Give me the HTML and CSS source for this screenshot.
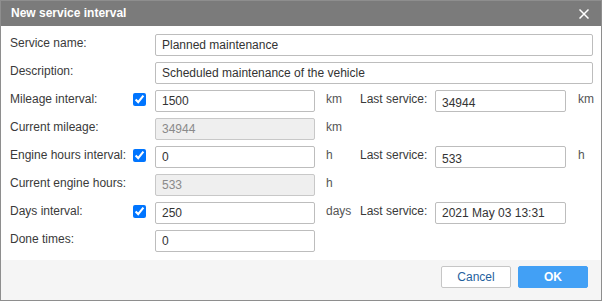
FILE: index.html
```html
<!DOCTYPE html>
<html>
<head>
  <title>New service interval</title>
  <link rel="stylesheet" href="styles.css">
</head>
<body>
  <div class="dialog">
    <div class="dialog-header">
      <span class="dialog-title">New service interval</span>
      <svg class="close-icon" width="10" height="10" viewBox="0 0 10 10">
        <path d="M0.5 0.5 L9.5 9.5 M9.5 0.5 L0.5 9.5" stroke="#ffffff" stroke-width="1.5" fill="none"/>
      </svg>
    </div>

    <div class="dialog-body">
      <label class="field-label">Service name:</label>
      <input class="field wide" type="text" value="Planned maintenance">

      <label class="field-label">Description:</label>
      <input class="field wide" type="text" value="Scheduled maintenance of the vehicle">

      <label class="field-label">Mileage interval:</label>
      <input class="check" type="checkbox" checked>
      <input class="field first-input" type="text" value="1500">
      <span class="unit">km</span>
      <span class="last-label">Last service:</span>
      <input class="field low" type="text" value="34944">
      <span class="unit unit-end">km</span>

      <label class="field-label">Current mileage:</label>
      <input class="field first-input" type="text" value="34944" disabled>
      <span class="unit">km</span>

      <label class="field-label">Engine hours interval:</label>
      <input class="check" type="checkbox" checked>
      <input class="field first-input" type="text" value="0">
      <span class="unit">h</span>
      <span class="last-label">Last service:</span>
      <input class="field low" type="text" value="533">
      <span class="unit unit-end">h</span>

      <label class="field-label">Current engine hours:</label>
      <input class="field first-input" type="text" value="533" disabled>
      <span class="unit">h</span>

      <label class="field-label">Days interval:</label>
      <input class="check" type="checkbox" checked>
      <input class="field first-input" type="text" value="250">
      <span class="unit">days</span>
      <span class="last-label">Last service:</span>
      <input class="field" type="text" value="2021 May 03 13:31">

      <label class="field-label">Done times:</label>
      <input class="field first-input" type="text" value="0">
    </div>

    <div class="dialog-footer">
      <button class="btn btn-cancel">Cancel</button>
      <button class="btn btn-ok">OK</button>
    </div>
  </div>
</body>
</html>
```

FILE: styles.css
```css
/* 服务间隔对话框 */
body {
  margin: 0;
  background-color: #ffffff;
  font-family: "Liberation Sans", Arial, sans-serif;
  font-size: 12px;
}

.dialog {
  width: 600px;
  height: 299px;
  border: 1px solid #8e8e8e;
  display: flex;
  flex-direction: column;
  background-color: #ffffff;
}

.dialog-header {
  height: 25px;
  padding: 0 12px 0 10px;
  display: flex;
  align-items: center;
  justify-content: space-between;
  background-color: #7b7b7b;
}

.dialog-title {
  color: #ffffff;
  font-weight: bold;
  line-height: 25px;
}

.close-icon {
  display: block;
}

.dialog-body {
  padding: 8px 7px 8px 9px;
  display: grid;
  grid-template-columns: 123px 22px 160px 45px 75px 131px 27px;
  grid-auto-rows: 22px;
  row-gap: 6px;
  align-items: start;
}

.field-label,
.last-label {
  padding-top: 2px;
  color: #3a3a3a;
  white-space: nowrap;
}

.field-label {
  grid-column: 1;
}

.last-label {
  grid-column: 5;
}

.check {
  grid-column: 2;
  margin: 3px 0 0 0;
  width: 13px;
  height: 13px;
}

.field {
  box-sizing: border-box;
  width: 100%;
  height: 22px;
  margin: 0;
  padding: 0 6px;
  border: 1px solid #bdbdbd;
  border-radius: 2px;
  font-family: "Liberation Sans", Arial, sans-serif;
  font-size: 12px;
  color: #333333;
  background-color: #ffffff;
  outline: none;
}

.field.wide {
  grid-column: 3 / 8;
}

.first-input {
  grid-column: 3;
}

.field.low {
  padding-top: 3px;
}

.field:disabled {
  background-color: #efefef;
  border-color: #c8c8c8;
  color: #8a8a8a;
}

.unit {
  padding: 2px 0 0 11px;
  color: #555555;
}

.unit-end {
  padding-left: 12px;
}

.dialog-footer {
  flex: 1;
  padding: 6px 13px 0 0;
  display: flex;
  justify-content: flex-end;
  align-items: flex-start;
  gap: 7px;
  background-color: #f5f5f5;
}

.btn {
  width: 70px;
  height: 22px;
  border-radius: 2px;
  font-family: "Liberation Sans", Arial, sans-serif;
  font-size: 12px;
  cursor: pointer;
}

.btn-cancel {
  background-color: #ffffff;
  border: 1px solid #c6c6c6;
  color: #1f5f9e;
}

.btn-ok {
  background-color: #42a0f5;
  border: 1px solid #42a0f5;
  color: #ffffff;
  font-weight: bold;
}
```
